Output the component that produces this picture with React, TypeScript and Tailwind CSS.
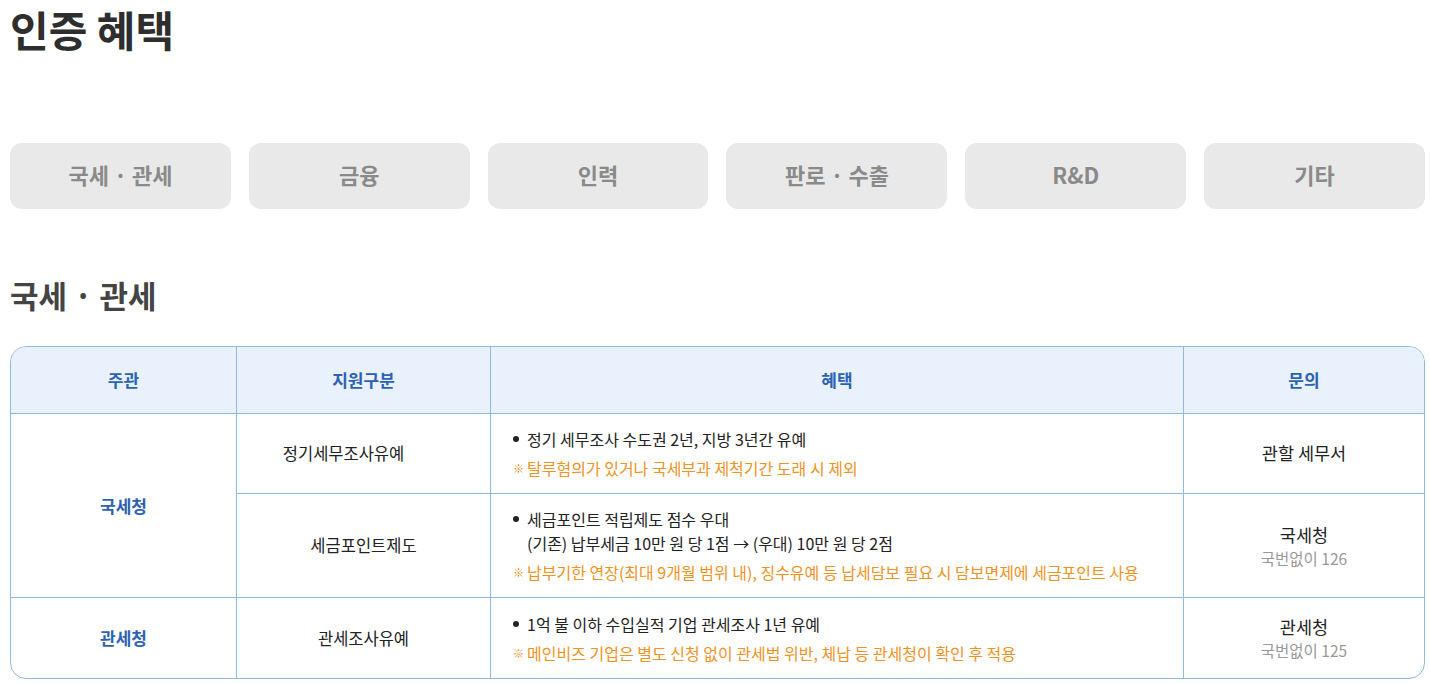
import React from 'react';

const tabs = ['국세 · 관세', '금융', '인력', '판로 · 수출', 'R&D', '기타'];

const border = 'border-[#8fb9e3]';

function Bullet({ children }: { children: React.ReactNode }) {
  return (
    <div className="flex items-start">
      <span className="flex h-[24px] w-[14px] shrink-0 items-center">
        <span className="h-[6px] w-[6px] rounded-full bg-[#222]" />
      </span>
      <div className="text-[16px] leading-[24px] text-[#222]">{children}</div>
    </div>
  );
}

function Note({ children }: { children: React.ReactNode }) {
  return (
    <div className="mt-[5px] flex items-start text-[16px] leading-[24px] text-[#f39222]">
      <span className="w-[14px] shrink-0 text-[11px] font-bold">※</span>
      <span>{children}</span>
    </div>
  );
}

export default function App() {
  return (
    <div
      className="min-h-screen bg-white pl-[10px] pr-[5px]"
      style={{ fontFamily: '"Noto Sans CJK KR", "Noto Sans", sans-serif' }}
    >
      <h1 className="text-[42px] font-bold leading-[58px] text-[#2e2e2e]">인증 혜택</h1>

      {/* category tabs */}
      <div className="mt-[85px] grid grid-cols-6 gap-[18px]">
        {tabs.map((t) => (
          <button
            key={t}
            className="h-[66px] rounded-[12px] bg-[#e9e9e9] pb-[3px] text-[22px] font-semibold text-[#8a8a8a]"
          >
            {t}
          </button>
        ))}
      </div>

      <h2 className="mt-[64px] text-[31px] font-bold leading-[44px] text-[#444]">국세 · 관세</h2>

      {/* benefit table */}
      <table
        className={`mt-[29px] w-full table-fixed border-separate border-spacing-0 overflow-hidden rounded-[16px] border ${border}`}
      >
        <colgroup>
          <col className="w-[226px]" />
          <col className="w-[254px]" />
          <col className="w-[693px]" />
          <col />
        </colgroup>
        <thead>
          <tr className="bg-[#e8f1fc] text-[17px] font-bold text-[#2c62b6]">
            <th className={`h-[67px] border-r border-b ${border}`}>주관</th>
            <th className={`border-r border-b ${border}`}>지원구분</th>
            <th className={`border-r border-b ${border}`}>혜택</th>
            <th className={`border-b ${border}`}>문의</th>
          </tr>
        </thead>
        <tbody className="text-[16.5px] text-[#222]">
          <tr className="h-[80px]">
            <td rowSpan={2} className={`border-r border-b ${border} text-center text-[17px] font-bold text-[#2c62b6]`}>
              국세청
            </td>
            <td className={`border-r border-b ${border} pr-[40px] text-center`}>정기세무조사유예</td>
            <td className={`border-r border-b ${border} pl-[22px]`}>
              <Bullet>정기 세무조사 수도권 2년, 지방 3년간 유예</Bullet>
              <Note>탈루혐의가 있거나 국세부과 제척기간 도래 시 제외</Note>
            </td>
            <td className={`border-b ${border} text-center text-[17.5px]`}>관할 세무서</td>
          </tr>
          <tr className="h-[104px]">
            <td className={`border-r border-b ${border} text-center`}>세금포인트제도</td>
            <td className={`border-r border-b ${border} pl-[22px]`}>
              <Bullet>
                세금포인트 적립제도 점수 우대
                <br />
                (기존) 납부세금 10만 원 당 1점 → (우대) 10만 원 당 2점
              </Bullet>
              <Note>납부기한 연장(최대 9개월 범위 내), 징수유예 등 납세담보 필요 시 담보면제에 세금포인트 사용</Note>
            </td>
            <td className={`border-b ${border} text-center`}>
              <div className="text-[17.5px] leading-[24px]">국세청</div>
              <div className="text-[15.5px] leading-[22px] text-[#999]">국번없이 126</div>
            </td>
          </tr>
          <tr className="h-[80px]">
            <td className={`border-r ${border} text-center text-[17px] font-bold text-[#2c62b6]`}>관세청</td>
            <td className={`border-r ${border} text-center`}>관세조사유예</td>
            <td className={`border-r ${border} pl-[22px]`}>
              <Bullet>1억 불 이하 수입실적 기업 관세조사 1년 유예</Bullet>
              <Note>메인비즈 기업은 별도 신청 없이 관세법 위반, 체납 등 관세청이 확인 후 적용</Note>
            </td>
            <td className="text-center">
              <div className="text-[17.5px] leading-[24px]">관세청</div>
              <div className="text-[15.5px] leading-[22px] text-[#999]">국번없이 125</div>
            </td>
          </tr>
        </tbody>
      </table>
    </div>
  );
}
